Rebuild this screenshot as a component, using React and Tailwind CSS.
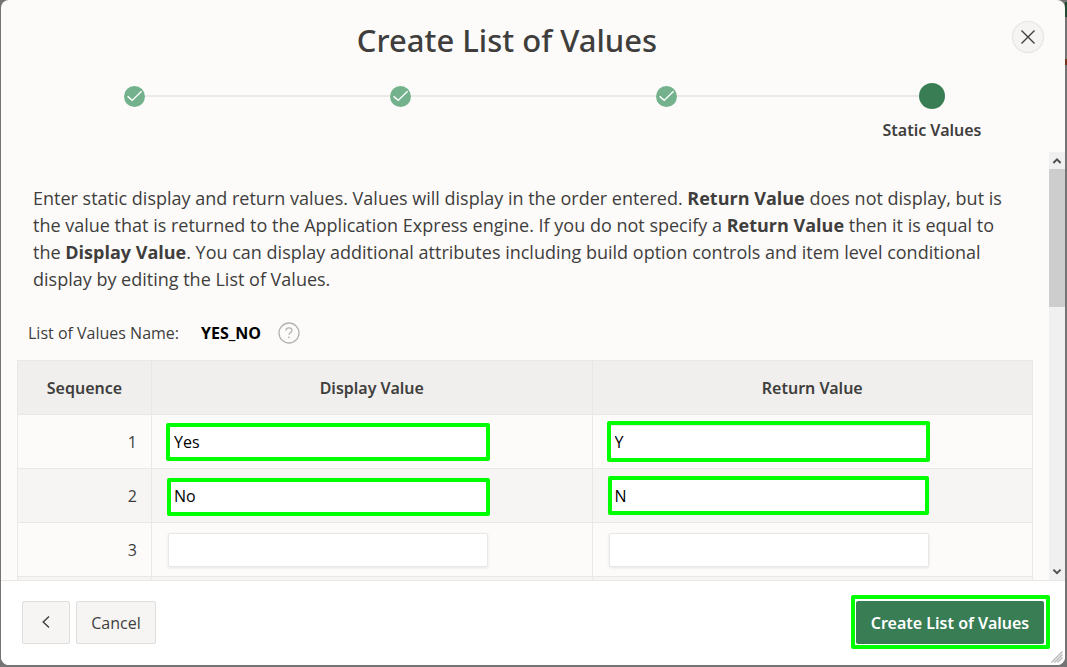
import React from "react";

const steps = ["Name and Type", "Source", "Options", "Static Values"];

const rows = [
  {
    seq: 1,
    display: "Yes",
    value: "Y",
    displayMark: "-inset-[2px]",
    valueMark: "-top-[4px] -bottom-[3px] -left-[2px] -right-px",
  },
  {
    seq: 2,
    display: "No",
    value: "N",
    displayMark: "-top-px -bottom-[3px] -left-px -right-[2px]",
    valueMark: "-top-[3px] -bottom-[2px] -left-px right-0",
  },
  { seq: 3, display: "", value: "" },
];

function CheckIcon() {
  return (
    <svg viewBox="0 0 21 21" className="size-[21px] shrink-0" aria-hidden="true">
      <circle cx="10.5" cy="10.5" r="10.5" fill="#74b28d" />
      <path d="M3.6 10.4 L8.2 14.4 L17.6 5.2" fill="none" stroke="#fff" strokeWidth="1.4" />
    </svg>
  );
}

function Steps() {
  return (
    <ol className="grid grid-cols-4">
      {steps.map((name, i) => {
        const last = i === steps.length - 1;
        return (
          <li key={name} className="flex flex-col items-center">
            <div className="flex h-[26px] w-full items-center">
              <span className={"h-[2px] flex-1 " + (i === 0 ? "bg-transparent" : "bg-[#ebeae9]")} />
              {last ? <span className="size-[26px] rounded-full bg-[#387d54]" /> : <CheckIcon />}
              <span className={"h-[2px] flex-1 " + (last ? "bg-transparent" : "bg-[#ebeae9]")} />
            </div>
            {last && (
              <span className="mt-[9px] font-['Noto_Sans',sans-serif] text-[16px] leading-6 font-semibold">
                {name}
              </span>
            )}
          </li>
        );
      })}
    </ol>
  );
}

function ValueField({ label, value, mark }) {
  return (
    <div className="relative w-[320px]">
      <input
        type="text"
        aria-label={label}
        defaultValue={value}
        className="block h-[34px] w-full rounded-[2px] border border-[#e9e8e6] bg-white px-[5px] text-[16px] text-black shadow-[0_1px_3px_rgba(0,0,0,0.09)] outline-none"
      />
      {mark && (
        <span
          className={"pointer-events-none absolute rounded-[2px] border-4 border-[#00ff00] " + mark}
        />
      )}
    </div>
  );
}

function ScrollBar() {
  return (
    <div className="flex w-4 shrink-0 flex-col items-center bg-[#f0f0f0]" aria-hidden="true">
      <svg viewBox="0 0 16 17" className="h-[17px] w-4 shrink-0">
        <path d="M4.4 11 L8 7.4 L11.6 11" fill="none" stroke="#505050" strokeWidth="2" />
      </svg>
      <div className="h-[138px] w-full bg-[#cdcdcd]" />
      <svg viewBox="0 0 16 17" className="mt-auto h-[17px] w-4 shrink-0">
        <path d="M4.4 6.6 L8 10.2 L11.6 6.6" fill="none" stroke="#505050" strokeWidth="2" />
      </svg>
    </div>
  );
}

export default function App() {
  return (
    <div className="flex h-screen bg-[#747474] pb-[2px] pl-px font-['Open_Sans','Noto_Sans',sans-serif] text-[#403e3c]">
      <div
        role="dialog"
        aria-labelledby="dialog-title"
        className="relative flex min-w-0 flex-1 flex-col overflow-hidden rounded-lg bg-[#fcfbfa]"
      >
        <header className="shrink-0 pb-[10px]">
          <div className="flex items-start pt-[18px] pr-[22px]">
            <h1
              id="dialog-title"
              className="flex-1 text-center font-['Noto_Sans',sans-serif] text-[31px] leading-[44px] font-medium"
            >
              Create List of Values
            </h1>
            <button
              type="button"
              aria-label="Close"
              className="mt-1 flex size-[30px] items-center justify-center rounded-full bg-[#f5f4f2] shadow-[0_0_1px_1px_rgba(0,0,0,0.1)]"
            >
              <svg viewBox="0 0 14 14" className="size-[14px]" aria-hidden="true">
                <path d="M0.5 0.5 L13.5 13.5 M13.5 0.5 L0.5 13.5" stroke="#403e3c" strokeWidth="1.4" />
              </svg>
            </button>
          </div>
          <div className="pt-[21px]">
            <Steps />
          </div>
        </header>

        <div className="flex min-h-0 flex-1">
          <main className="min-w-0 flex-1 overflow-hidden pt-[33px] pr-4 pl-4">
            <p className="pr-5 pl-4 text-[18px] leading-[27px]">
              Enter static display and return values. Values will display in the order entered.{" "}
              <b>Return Value</b> does not display, but is the value that is returned to the
              Application Express engine. If you do not specify a <b>Return Value</b> then it is
              equal to the <b>Display Value</b>. You can display additional attributes including
              build option controls and item level conditional display by editing the List of
              Values.
            </p>

            <div className="mt-[28px] flex h-6 items-center pl-[11px] text-[16px]">
              <span className="w-[173px]">List of Values Name:</span>
              <span className="font-bold text-black">YES_NO</span>
              <button type="button" aria-label="Help" className="ml-[17px]">
                <svg viewBox="0 0 22 22" className="size-[22px]" fill="none" stroke="#b5b3b1" aria-hidden="true">
                  <circle cx="11" cy="11" r="10" strokeWidth="1.3" />
                  <path
                    d="M8 8.6 C8 6.8 9.2 5.9 11 5.9 C12.8 5.9 14 6.9 14 8.4 C14 10.4 11 10.4 11 12.8"
                    strokeWidth="1.3"
                  />
                  <path d="M11 14.6 V16.2" strokeWidth="1.4" />
                </svg>
              </button>
            </div>

            <table className="mt-[15px] w-full table-fixed border-collapse text-[16px]">
              <colgroup>
                <col className="w-[134px]" />
                <col />
                <col />
              </colgroup>
              <thead>
                <tr className="h-[54px] bg-[#f0efed]">
                  {["Sequence", "Display Value", "Return Value"].map((h) => (
                    <th
                      key={h}
                      scope="col"
                      className="border border-[#e9e8e6] font-['Noto_Sans',sans-serif] font-semibold"
                    >
                      {h}
                    </th>
                  ))}
                </tr>
              </thead>
              <tbody>
                {rows.map((r) => (
                  <tr key={r.seq} className="h-[54px] even:bg-[#f6f5f3]">
                    <td className="border border-[#e9e8e6] pr-[14px] text-right">{r.seq}</td>
                    <td className="border border-[#e9e8e6] px-4">
                      <ValueField label={"Display value " + r.seq} value={r.display} mark={r.displayMark} />
                    </td>
                    <td className="border border-[#e9e8e6] px-4">
                      <ValueField label={"Return value " + r.seq} value={r.value} mark={r.valueMark} />
                    </td>
                  </tr>
                ))}
                <tr className="h-[54px] bg-[#f6f5f3]">
                  <td className="border border-[#e9e8e6]" />
                  <td className="border border-[#e9e8e6]" />
                  <td className="border border-[#e9e8e6]" />
                </tr>
              </tbody>
            </table>
          </main>
          <ScrollBar />
        </div>

        <footer className="flex h-[85px] shrink-0 items-center gap-[6px] border-t border-[#e9e8e6] bg-white px-[21px] pb-[2px] text-[16px]">
          <button
            type="button"
            aria-label="Previous"
            className="flex h-[43px] w-12 items-center justify-center rounded-[2px] border border-[#dfdedc] bg-[#f6f5f3]"
          >
            <svg viewBox="0 0 8 12" className="h-3 w-2" aria-hidden="true">
              <path d="M7 0.5 L1.2 6 L7 11.5" fill="none" stroke="#403e3c" strokeWidth="1.4" />
            </svg>
          </button>
          <button
            type="button"
            className="h-[43px] w-20 rounded-[2px] border border-[#dfdedc] bg-[#f6f5f3] pt-[2px]"
          >
            Cancel
          </button>
          <div className="relative ml-auto">
            <button
              type="button"
              className="block h-[43px] w-[188px] rounded-[2px] bg-[#387d54] pt-[2px] font-['Noto_Sans',sans-serif] font-semibold text-white"
            >
              Create List of Values
            </button>
            <span className="pointer-events-none absolute -top-[6px] -right-[6px] -bottom-[5px] -left-[5px] rounded-[2px] border-4 border-[#00ff00]" />
          </div>
        </footer>
        <svg viewBox="0 0 12 12" className="absolute right-[2px] bottom-[2px] size-3" aria-hidden="true">
          <path d="M0.5 11.5 L11.5 0.5 M3.5 11.5 L11.5 3.5 M6.5 11.5 L11.5 6.5" stroke="#b4b4b4" strokeWidth="1.3" />
        </svg>
      </div>
      <div className="w-[2px] shrink-0 pt-[2px]" aria-hidden="true">
        <div className="h-[15px] bg-[#1d4a32]" />
        <div className="mt-[42px] h-[6px] bg-[#7a3418]" />
      </div>
    </div>
  );
}
